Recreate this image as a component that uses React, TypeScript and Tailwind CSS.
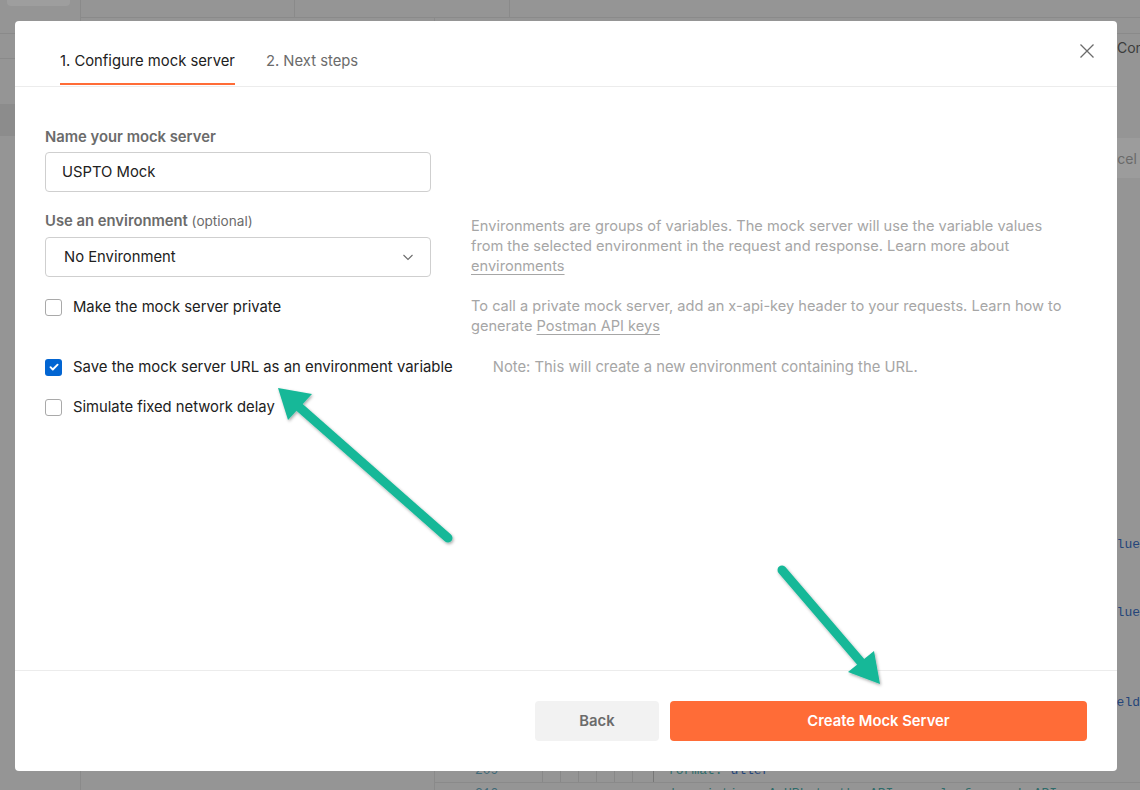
import React from "react";

const font = { fontFamily: "Inter, 'Noto Sans', sans-serif" };
const mono = { fontFamily: "'Liberation Mono', monospace" };

function Checkbox({ checked }: { checked?: boolean }) {
  if (checked) {
    return (
      <span className="flex h-[17px] w-[17px] shrink-0 items-center justify-center rounded-[3px] bg-[#0265d2]">
        <svg width="12" height="12" viewBox="0 0 12 12" fill="none">
          <path d="M2.5 6.2l2.3 2.3L9.6 3.7" stroke="#fff" strokeWidth="1.9" strokeLinecap="round" strokeLinejoin="round" />
        </svg>
      </span>
    );
  }
  return <span className="h-[17px] w-[17px] shrink-0 rounded-[3px] border border-[#a9a9a9] bg-white" />;
}

function CodeRow({ text }: { text: string }) {
  return (
    <div className="flex h-[22px] shrink-0 items-center whitespace-nowrap text-[13px] text-[#25457a]" style={mono}>
      <span className="w-[666px] shrink-0" />
      <span>{text}</span>
    </div>
  );
}

function Background() {
  return (
    <div className="flex h-full w-full flex-col bg-[#959595]">
      <div className="flex h-[18px] shrink-0">
        <div className="w-[81px] border-r border-[#8a8a8a] px-[7px]">
          <div className="h-[6px] w-[63px] rounded-b-[4px] bg-[#9e9e9e]" />
        </div>
        <div className="w-[214px] border-b border-r border-[#8a8a8a]" />
        <div className="w-[215px] border-b border-r border-[#8a8a8a]" />
        <div className="flex-1 border-b border-[#8a8a8a]" />
      </div>
      <div className="flex flex-1">
        <div className="flex w-[81px] shrink-0 flex-col border-r border-[#8a8a8a]">
          <div className="h-[16px] border-b border-[#8a8a8a]" />
          <div className="h-[25px] border-b border-[#8a8a8a]" />
          <div className="h-[45px]" />
          <div className="h-[32px] bg-[#8c8c8c]" />
        </div>
        <div className="w-[354px] shrink-0 border-r border-[#8a8a8a]" />
        <div className="flex flex-1 flex-col overflow-hidden">
          <div className="h-[16px] shrink-0 border-b border-[#8a8a8a]" />
          <div className="flex h-[26px] shrink-0 items-center whitespace-nowrap text-[14px] text-[#3c3c3c]">
            <span className="w-[682px] shrink-0" />
            <span>Configure</span>
          </div>
          <div className="h-[78px] shrink-0" />
          <div className="flex h-[40px] shrink-0 items-center">
            <span className="w-[644px] shrink-0" />
            <span className="flex h-[40px] items-center whitespace-nowrap rounded-[3px] bg-[#9c9c9c] px-[12px] text-[14px] text-[#6a6a6a]">Cancel</span>
          </div>
          <div className="h-[356px] shrink-0" />
          <CodeRow text="value" />
          <div className="h-[46px] shrink-0" />
          <CodeRow text="value" />
          <div className="h-[68px] shrink-0" />
          <CodeRow text="fieldName" />
          <div className="h-[46px] shrink-0" />
          <div className="flex h-[22px] shrink-0 items-center whitespace-nowrap text-[13px]" style={mono}>
            <span className="w-[90px] shrink-0 pl-[40px] text-[#3f6a78]">209</span>
            <span className="flex h-full w-[128px] shrink-0">
              <span className="w-[18px] border-r border-[#888]" />
              <span className="w-[18px] border-r border-[#888]" />
              <span className="w-[18px] border-r border-[#888]" />
              <span className="w-[18px] border-r border-[#888]" />
              <span className="w-[18px] border-r border-[#888]" />
              <span className="w-[18px] border-r border-[#888]" />
            </span>
            <span className="h-full border-l border-[#777] pl-[14px] leading-[22px]"><span className="text-[#2f6c6a]">format:</span> <span className="text-[#25457a]">uller</span></span>
          </div>
          <div className="flex h-[22px] shrink-0 items-center whitespace-nowrap border-t border-[#8a8a8a] text-[13px]" style={mono}>
            <span className="w-[90px] shrink-0 pl-[40px] text-[#3f6a78]">210</span>
            <span className="w-[128px] shrink-0" />
            <span className="pl-[14px] text-[#2f6c6a]">description: A URL to the API console for each API</span>
          </div>
        </div>
      </div>
    </div>
  );
}

function Arrows() {
  return (
    <svg className="pointer-events-none absolute left-0 top-0" width="1140" height="790" viewBox="0 0 1140 790">
      <defs>
        <filter id="sh" x="-20%" y="-20%" width="140%" height="140%">
          <feDropShadow dx="1" dy="1.5" stdDeviation="1.5" floodColor="#000" floodOpacity="0.35" />
        </filter>
      </defs>
      <g filter="url(#sh)" fill="#17b898" stroke="#17b898">
        <line x1="448" y1="538" x2="298" y2="406" strokeWidth="9" strokeLinecap="round" />
        <polygon points="278,388 312,394 288,420" stroke="none" />
        <line x1="782" y1="570" x2="866" y2="668" strokeWidth="9" strokeLinecap="round" />
        <polygon points="880,684 874,651 848,672" stroke="none" />
      </g>
    </svg>
  );
}

export default function App() {
  return (
    <div className="relative h-[790px] w-[1140px] overflow-hidden" style={font}>
      <Background />
      <div className="absolute left-[15px] top-[21px] flex h-[750px] w-[1102px] flex-col rounded-[4px] bg-white">
        <div className="flex h-[66px] shrink-0 justify-between border-b border-[#ececec] pl-[45px]">
          <div className="flex items-end gap-[31px]">
            <div className="mb-[1px] border-b-2 border-[#ff6c37] pb-[12px] text-[14.8px] leading-[20px] text-[#212121]">1. Configure mock server</div>
            <div className="mb-[1px] border-b-2 border-transparent pb-[12px] text-[14.8px] leading-[20px] text-[#6b6b6b]">2. Next steps</div>
          </div>
          <div className="mr-[23px] mt-[23px] self-start">
            <svg width="14" height="14" viewBox="0 0 14 14" fill="none">
              <path d="M0.5 0.5L13.5 13.5M13.5 0.5L0.5 13.5" stroke="#6b6b6b" strokeWidth="1.3" />
            </svg>
          </div>
        </div>

        <div className="flex flex-1 flex-col px-[30px] pt-[40px]">
          <div className="text-[14.8px] font-semibold leading-[20px] text-[#6b6b6b]">Name your mock server</div>
          <div className="mt-[5px] flex h-[40px] w-[386px] items-center rounded-[4px] border border-[#cfcfcf] px-[16px] text-[14.8px] text-[#212121]">USPTO Mock</div>

          <div className="mt-[19px] flex gap-[40px]">
            <div className="flex w-[386px] shrink-0 flex-col">
              <div className="text-[14.8px] font-semibold leading-[20px] text-[#6b6b6b]">
                Use an environment <span className="text-[13.6px] font-normal">(optional)</span>
              </div>
              <div className="mt-[6px] flex h-[40px] items-center justify-between rounded-[4px] border border-[#cfcfcf] pl-[18px] pr-[16px] text-[14.8px] text-[#212121]">
                <span>No Environment</span>
                <svg width="12" height="12" viewBox="0 0 12 12" fill="none">
                  <path d="M1.5 4l4.5 4.5L10.5 4" stroke="#6b6b6b" strokeWidth="1.1" />
                </svg>
              </div>
            </div>
            <div className="mt-[5px] whitespace-nowrap text-[14.6px] leading-[20px] text-[#a6a6a6]">
              Environments are groups of variables. The mock server will use the variable values
              <br />
              from the selected environment in the request and response. Learn more about
              <br />
              <span className="underline decoration-[#a6a6a6] underline-offset-[3px]">environments</span>
            </div>
          </div>

          <div className="mt-[19px] flex gap-[40px]">
            <div className="mt-[1px] flex h-[20px] w-[386px] shrink-0 items-center gap-[11px]">
              <Checkbox />
              <span className="text-[14.8px] leading-[20px] text-[#212121]">Make the mock server private</span>
            </div>
            <div className="whitespace-nowrap text-[14.6px] leading-[20px] text-[#a6a6a6]">
              To call a private mock server, add an x-api-key header to your requests. Learn how to
              <br />
              generate <span className="underline decoration-[#a6a6a6] underline-offset-[3px]">Postman API keys</span>
            </div>
          </div>

          <div className="mt-[21px] flex gap-[40px]">
            <div className="flex min-w-[386px] shrink-0 items-center gap-[11px]">
              <Checkbox checked />
              <span className="whitespace-nowrap text-[14.9px] leading-[20px] text-[#212121]">Save the mock server URL as an environment variable</span>
            </div>
            <div className="whitespace-nowrap text-[14.8px] leading-[20px] text-[#a6a6a6]">Note: This will create a new environment containing the URL.</div>
          </div>

          <div className="mt-[20px] flex items-center gap-[11px]">
            <Checkbox />
            <span className="text-[14.8px] leading-[20px] text-[#212121]">Simulate fixed network delay</span>
          </div>
        </div>

        <div className="flex shrink-0 justify-end gap-[11px] border-t border-[#ececec] pb-[30px] pr-[30px] pt-[30px]">
          <button className="flex h-[40px] w-[124px] items-center justify-center rounded-[4px] bg-[#f2f2f2] text-[14.8px] font-semibold text-[#6b6b6b]">Back</button>
          <button className="flex h-[40px] w-[417px] items-center justify-center rounded-[4px] bg-[#ff6c37] text-[14.8px] font-semibold text-white">Create Mock Server</button>
        </div>
      </div>
      <Arrows />
    </div>
  );
}
